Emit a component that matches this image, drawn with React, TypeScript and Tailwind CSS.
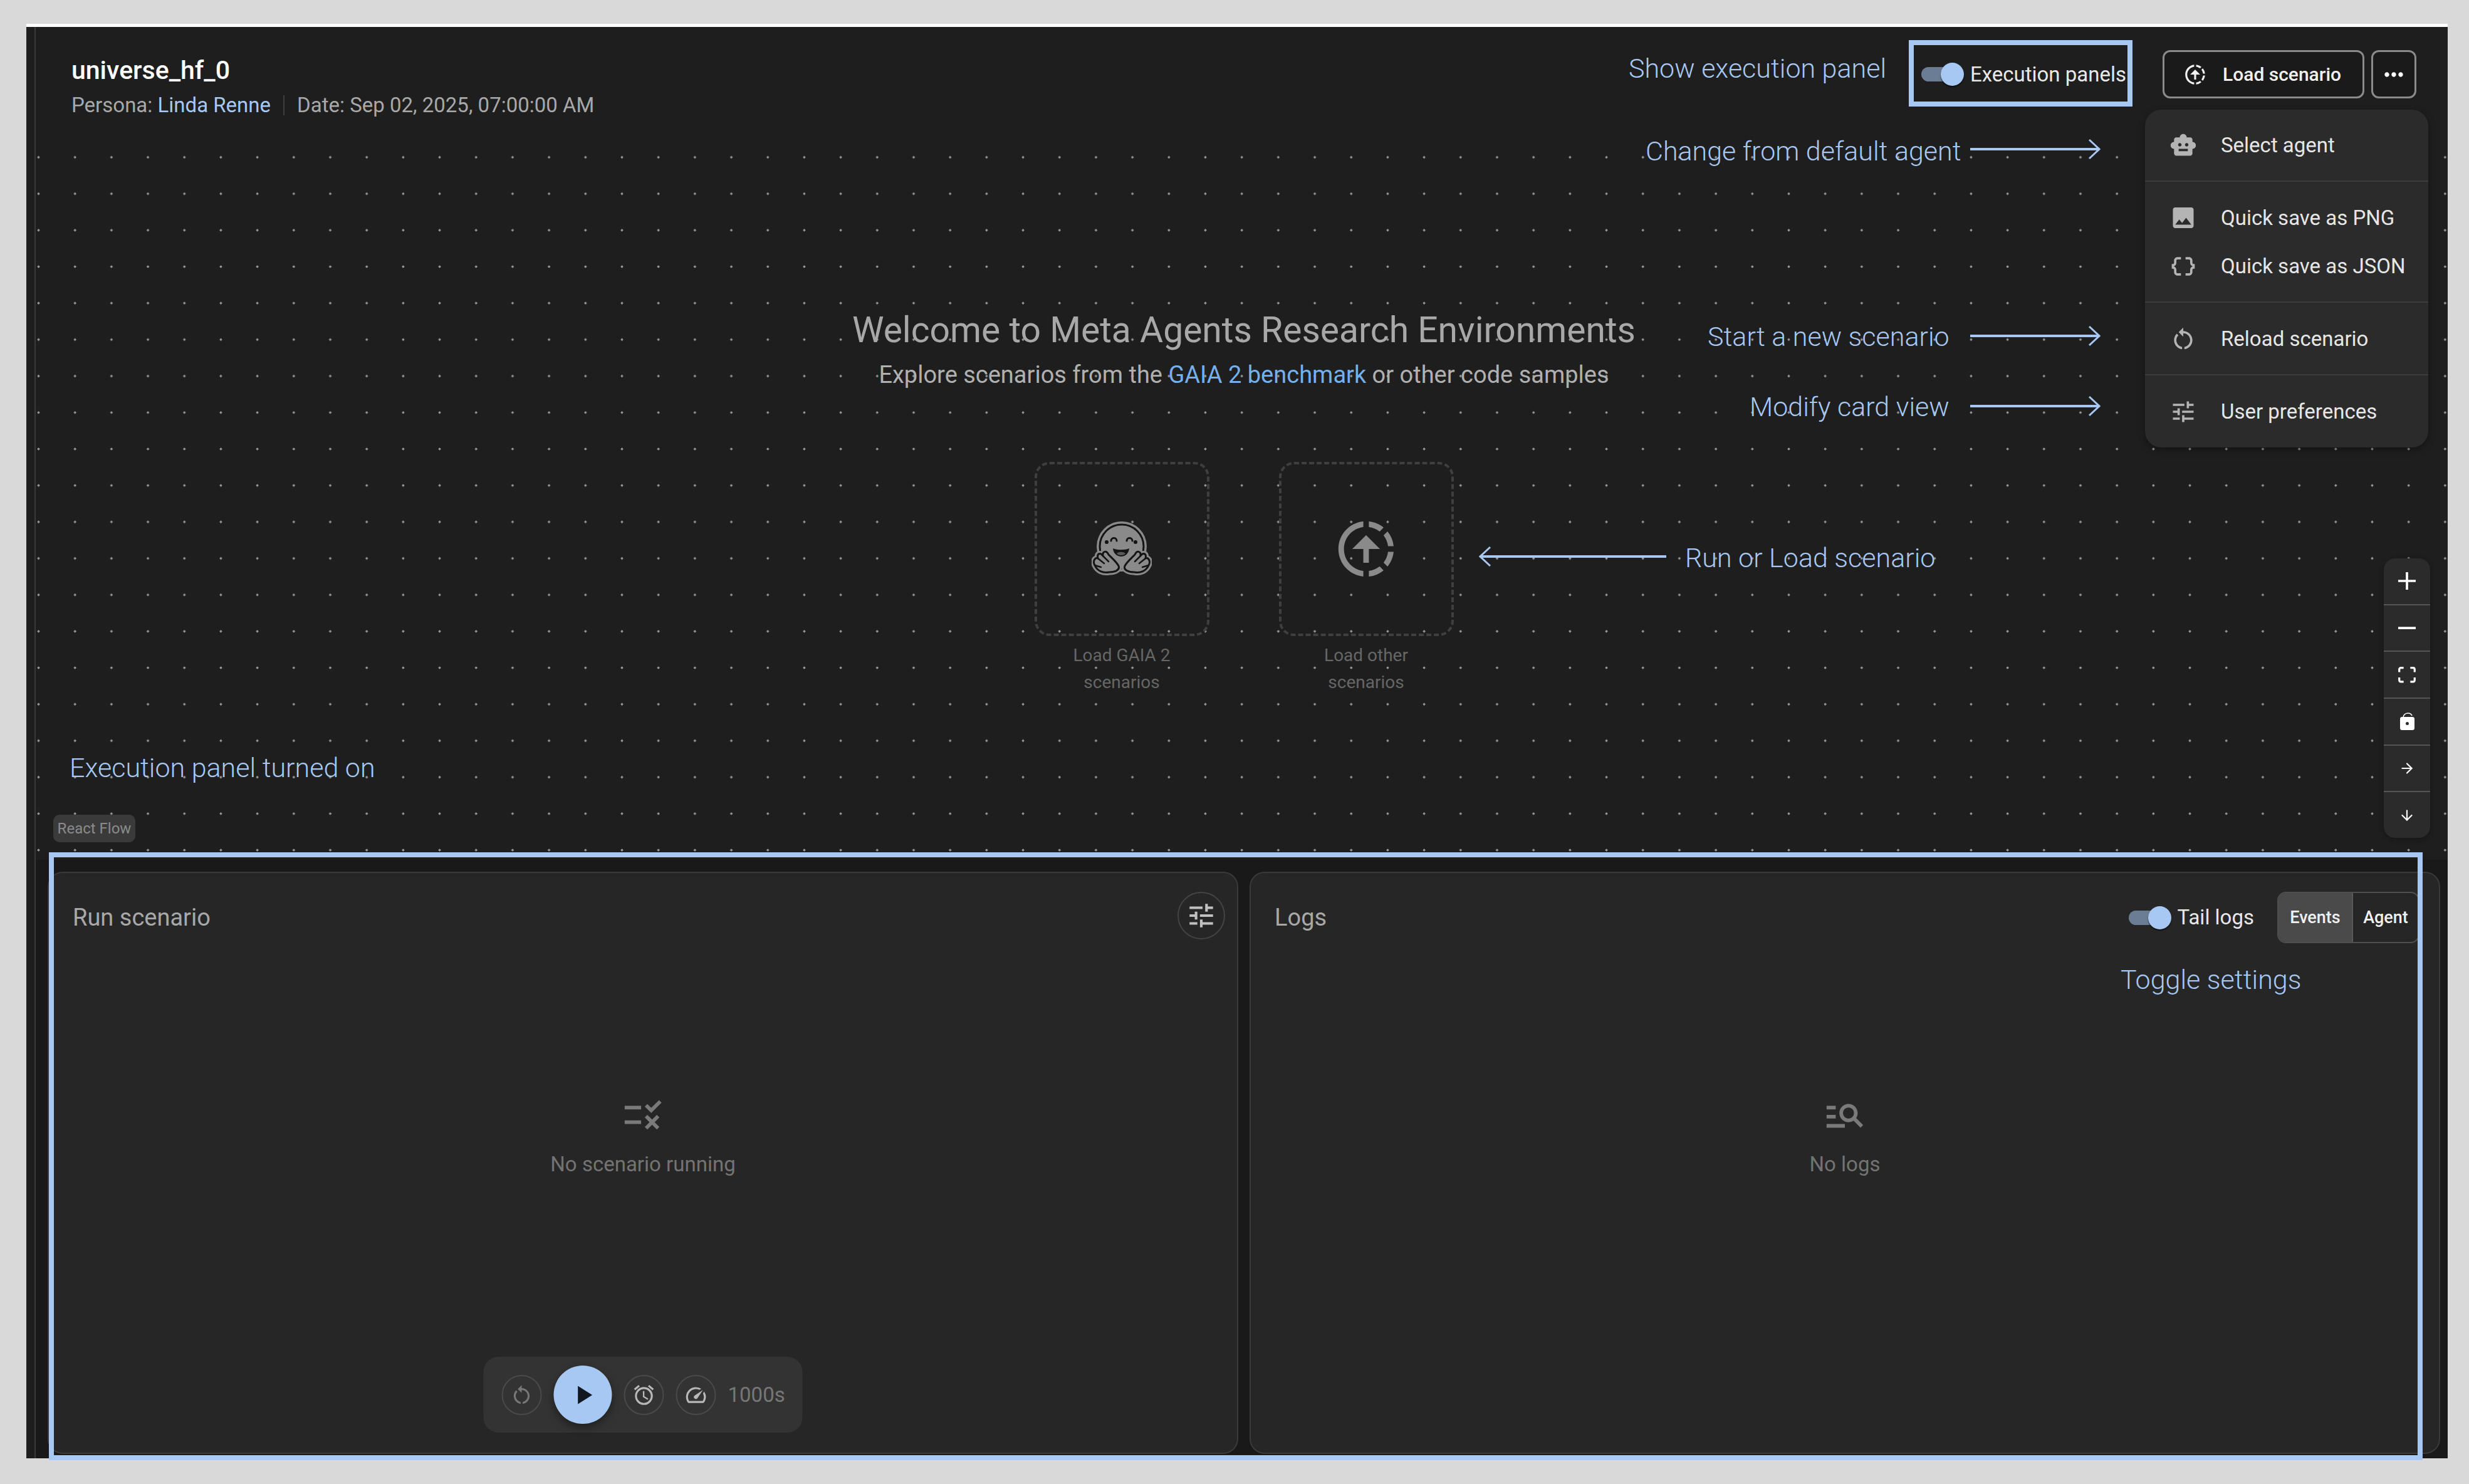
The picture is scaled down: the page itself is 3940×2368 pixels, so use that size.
import { ArrowDown, ArrowRight } from 'lucide-react';
import {
  MdAlarm,
  MdDataObject,
  MdDownloading,
  MdImage,
  MdManageSearch,
  MdMoreHoriz,
  MdPlayArrow,
  MdRestartAlt,
  MdRule,
  MdSmartToy,
  MdSpeed,
  MdTune,
} from 'react-icons/md';

// annotation arrow drawn over the screenshot
function NoteArrow({ className, width, flip }: { className: string; width: number; flip?: boolean }) {
  return (
    <svg
      className={`absolute text-[#a6c8f2] ${flip ? '-scale-x-100' : ''} ${className}`}
      width={width}
      height={36}
      viewBox={`0 0 ${width} 36`}
      fill="none"
      stroke="currentColor"
    >
      <path d={`M0 18H${width - 2}`} strokeWidth={4} />
      <path d={`M${width - 18} 3L${width - 2} 18L${width - 18} 33`} strokeWidth={3} />
    </svg>
  );
}

function Toggle({ label }: { label: string }) {
  return (
    <div className="flex items-center">
      <div className="relative h-[23px] w-[64px] rounded-full bg-[#6b7d94] mr-[14px]">
        <div className="absolute left-[31px] top-[-7px] h-[37px] w-[37px] rounded-full bg-[#a6c8f2] shadow-[0_2px_2px_rgba(0,0,0,0.6)]" />
      </div>
      <span className="text-[33px] leading-[44px] text-[#e8e8e8]">{label}</span>
    </div>
  );
}

function MenuItem({ icon, label }: { icon: React.ReactNode; label: string }) {
  return (
    <div className="flex h-[77px] items-center gap-[38px] pl-[39px] text-[33px] text-[#e6e6e6]">
      <span className="flex w-[44px] justify-center text-[#b4b4b4]">{icon}</span>
      {label}
    </div>
  );
}

function HuggingFace() {
  const hand = 'M5 71C1 64 6 58 10 60C8 52 14 50 18 56C17 48 24 47 27 54C33 60 40 66 43 72C46 79 36 82 28 82C18 84 9 80 5 71Z';
  return (
    <svg width="96" height="90" viewBox="0 0 96 90" strokeLinejoin="round" strokeLinecap="round">
      <circle cx="48" cy="41" r="40" fill="#8a8a8a" />
      <circle cx="48" cy="41" r="35" fill="#8a8a8a" stroke="#141414" strokeWidth="3" />
      <path d="M31 32a4.500 4.500 0 0 1 9 0" fill="none" stroke="#141414" strokeWidth="3" />
      <path d="M56 32a4.500 4.500 0 0 1 9 0" fill="none" stroke="#141414" strokeWidth="3" />
      <circle cx="24" cy="34" r="3" fill="#141414" />
      <circle cx="70" cy="34" r="3" fill="#141414" />
      <path d="M34 44C42 47 54 47 60 44C59 53 53 57 47 57C41 57 35 53 34 44Z" fill="#141414" />
      <path d="M40 52C44 49 50 49 54 52C52 56 42 56 40 52Z" fill="#5a5a5a" />
      <g>
        <path d={hand} fill="#8a8a8a" stroke="#8a8a8a" strokeWidth="9" />
        <path d={hand} fill="#8a8a8a" stroke="#141414" strokeWidth="3" />
        <path d="M10 60L20 68M18 56L27 65M5 71L15 74" stroke="#141414" strokeWidth="2.500" fill="none" />
      </g>
      <g transform="matrix(-1 0 0 1 96 0)">
        <path d={hand} fill="#8a8a8a" stroke="#8a8a8a" strokeWidth="9" />
        <path d={hand} fill="#8a8a8a" stroke="#141414" strokeWidth="3" />
        <path d="M10 60L20 68M18 56L27 65M5 71L15 74" stroke="#141414" strokeWidth="2.500" fill="none" />
      </g>
    </svg>
  );
}

function ControlButton({ children, last }: { children: React.ReactNode; last?: boolean }) {
  return (
    <div className={`flex flex-1 items-center justify-center text-white ${last ? '' : 'border-b-2 border-[#555555]'}`}>
      {children}
    </div>
  );
}

function RoundButton({ children }: { children: React.ReactNode }) {
  return (
    <div className="flex h-[64px] w-[64px] items-center justify-center rounded-full border-2 border-[#4a4a4a]">
      {children}
    </div>
  );
}

export default function App() {
  return (
    <div className="relative h-[2368px] w-[3940px] overflow-hidden bg-[#d9d9d9] pl-[42px] pt-[38px] font-['Roboto',sans-serif]">
      <div className="flex h-[2289px] w-[3864px] border-t-[5px] border-white bg-[#1e1e1e]">
        <div className="w-[15px] shrink-0 border-r-2 border-[#3a3a3a]" />

        <div className="flex min-w-0 flex-1 flex-col">
          {/* canvas */}
          <div className="relative h-[1329px] bg-[#1e1e1e] bg-[radial-gradient(circle,#959595_1.8px,transparent_2.2px)] bg-[length:58.2px_58.2px] bg-[position:-24.6px_4.3px]">
            <header className="flex h-[157px] items-start justify-between bg-[#1e1e1e] pl-[57px] pr-[50px]">
              <div className="pt-[47px]">
                <div className="text-[41px] font-medium leading-[44px] text-white">universe_hf_0</div>
                <div className="mt-[14px] flex items-center text-[33px] leading-[40px] text-[#a8a8a8]">
                  <span>Persona:&nbsp;</span>
                  <span className="text-[#a6c8f2]">Linda Renne</span>
                  <span className="mx-[20px] h-[32px] w-[2px] bg-[#3f3f3f]" />
                  <span>Date: Sep 02, 2025, 07:00:00 AM</span>
                </div>
              </div>
              <div className="flex items-center pt-[37px]">
                <Toggle label="Execution panels" />
                <button className="ml-[58px] flex h-[77px] w-[322px] items-center rounded-[12px] border-[3px] border-[#8a8a8a] bg-[#1a1a1a] pl-[30px] text-[30px] font-medium text-[#f0f0f0]">
                  <MdDownloading size={38} className="-scale-y-100" />
                  <span className="ml-[25px]">Load scenario</span>
                </button>
                <button className="ml-[11px] flex h-[77px] w-[72px] items-center justify-center rounded-[12px] border-[3px] border-[#8a8a8a] bg-[#1a1a1a] text-white">
                  <MdMoreHoriz size={44} />
                </button>
              </div>
            </header>

            {/* welcome node */}
            <div className="absolute left-[1071px] top-[454px] w-[1714px] text-center">
              <div className="text-[57px] leading-[60px] text-[#a8a8a8]">Welcome to Meta Agents Research Environments</div>
              <div className="mt-[21px] text-[38px] leading-[40px] text-[#b0b0b0]">
                Explore scenarios from the <span className="text-[#74b0ee]">GAIA 2 benchmark</span> or other code samples
              </div>
              <div className="mt-[119px] flex justify-center gap-[111px]">
                <div className="w-[279px]">
                  <div className="flex h-[278px] items-center justify-center rounded-[24px] border-4 border-dashed border-[#3f3f3f]">
                    <HuggingFace />
                  </div>
                  <div className="mt-[9px] text-[28px] leading-[43px] text-[#666666]">
                    Load GAIA 2<br />scenarios
                  </div>
                </div>
                <div className="w-[279px]">
                  <div className="flex h-[278px] items-center justify-center rounded-[24px] border-4 border-dashed border-[#3f3f3f]">
                    <MdDownloading size={106} className="-scale-y-100 text-[#8a8a8a]" />
                  </div>
                  <div className="mt-[9px] text-[28px] leading-[43px] text-[#666666]">
                    Load other<br />scenarios
                  </div>
                </div>
              </div>
            </div>

            {/* zoom controls */}
            <div className="absolute right-[28px] top-[848px] flex h-[446px] w-[74px] flex-col overflow-hidden rounded-[18px] bg-[#2b2b2b] shadow-[0_2px_8px_rgba(0,0,0,0.3)]">
              <ControlButton>
                <svg width="28" height="28" viewBox="0 0 32 32" fill="currentColor">
                  <path d="M32 18.133H18.133V32h-4.266V18.133H0v-4.266h13.867V0h4.266v13.867H32z" />
                </svg>
              </ControlButton>
              <ControlButton>
                <svg width="28" height="5" viewBox="0 0 32 5" fill="currentColor">
                  <path d="M0 0h32v4.200H0z" />
                </svg>
              </ControlButton>
              <ControlButton>
                <svg width="28" height="26" viewBox="0 0 32 30" fill="currentColor">
                  <path d="M3.692 4.630c0-.53.4-.938.939-.938h5.215V0H4.708C2.130 0 0 2.054 0 4.630v5.216h3.692V4.631zM27.354 0h-5.200v3.692h5.170c.53 0 .984.4.984.939v5.215H32V4.631A4.624 4.624 0 0027.354 0zm.954 24.830c0 .532-.4.940-.939.940h-5.215v3.768h5.215c2.577 0 4.631-2.130 4.631-4.707v-5.139h-3.692v5.139zm-23.677.940c-.531 0-.939-.4-.939-.940v-5.138H0v5.139c0 2.577 2.130 4.707 4.708 4.707h5.138V25.770H4.631z" />
                </svg>
              </ControlButton>
              <ControlButton>
                <svg width="23" height="28" viewBox="0 0 23 28">
                  <path d="M5 7C6 3 9 1 13 1C16 1 18 2.500 19 5" fill="none" stroke="currentColor" strokeWidth="1.600" />
                  <path
                    d="M3 7H20C21.700 7 23 8.300 23 10V25C23 26.700 21.700 28 20 28H3C1.300 28 0 26.700 0 25V10C0 8.300 1.300 7 3 7ZM11.500 15A2.500 2.500 0 1 0 11.500 20A2.500 2.500 0 1 0 11.500 15Z"
                    fill="currentColor"
                    fillRule="evenodd"
                  />
                </svg>
              </ControlButton>
              <ControlButton>
                <ArrowRight size={26} strokeWidth={2} />
              </ControlButton>
              <ControlButton last>
                <ArrowDown size={26} strokeWidth={2} />
              </ControlButton>
            </div>

            <div className="absolute left-[28px] top-[1257px] flex h-[44px] w-[131px] items-center justify-center rounded-[10px] bg-[#3a3a3a] text-[24px] text-[#8a8a8a]">
              React Flow
            </div>
          </div>

          {/* execution panels */}
          <div className="flex flex-1 gap-[18px] bg-[#191919] pb-[7px] pl-[19px] pr-[12px] pt-[19px]">
            <section className="relative flex flex-1 flex-col rounded-[24px] border-2 border-[#3a3a3a] bg-[#262626]">
              <div className="flex h-[142px] items-center justify-between pl-[38px] pr-[19px]">
                <span className="text-[38px] text-[#a8a8a8]">Run scenario</span>
                <div className="mb-[6px] flex h-[76px] w-[76px] items-center justify-center rounded-full border-2 border-[#444444] text-[#c0c0c0]">
                  <MdTune size={50} />
                </div>
              </div>
              <div className="flex flex-1 flex-col items-center pt-[209px]">
                <MdRule size={70} className="text-[#7a7a7a]" />
                <span className="mt-[21px] text-[33px] leading-[45px] text-[#737373]">No scenario running</span>
              </div>
              <div className="absolute bottom-[32px] left-1/2 flex h-[121px] w-[509px] -translate-x-1/2 items-center gap-[19px] rounded-[24px] bg-[#333333] pl-[29px]">
                <RoundButton>
                  <MdRestartAlt size={38} className="text-[#777777]" />
                </RoundButton>
                <div className="flex h-[93px] w-[93px] items-center justify-center rounded-full bg-[#a6c8f2] shadow-[0_6px_14px_rgba(0,0,0,0.4)]">
                  <MdPlayArrow size={50} className="text-[#12181f]" />
                </div>
                <RoundButton>
                  <MdAlarm size={38} className="text-[#b8b8b8]" />
                </RoundButton>
                <RoundButton>
                  <MdSpeed size={38} className="text-[#b8b8b8]" />
                </RoundButton>
                <span className="text-[33px] text-[#777777]">1000s</span>
              </div>
            </section>

            <section className="relative flex flex-1 flex-col rounded-[24px] border-2 border-[#3a3a3a] bg-[#262626]">
              <div className="flex h-[142px] items-center justify-between pl-[38px] pr-[31px]">
                <span className="text-[38px] text-[#a8a8a8]">Logs</span>
                <div className="flex items-center">
                  <Toggle label="Tail logs" />
                  <div className="ml-[37px] flex h-[82px] rounded-[14px] border-2 border-[#4f4f4f] text-[27px] font-medium text-[#f0f0f0]">
                    <div className="flex w-[119px] items-center justify-center rounded-l-[12px] border-r-2 border-[#5a5a5a] bg-[#4a4a4a]">Events</div>
                    <div className="flex w-[104px] items-center justify-center">Agent</div>
                  </div>
                </div>
              </div>
              <div className="flex flex-1 flex-col items-center pt-[209px]">
                <MdManageSearch size={70} className="text-[#7a7a7a]" />
                <span className="mt-[21px] text-[33px] leading-[45px] text-[#737373]">No logs</span>
              </div>
            </section>
          </div>
        </div>
      </div>

      {/* dropdown menu */}
      <div className="absolute left-[3423px] top-[175px] w-[452px] rounded-[26px] bg-[#2b2b2b] shadow-[0_4px_12px_rgba(0,0,0,0.35)]">
        <div className="border-b-2 border-[#3d3d3d] py-[18px]">
          <MenuItem icon={<MdSmartToy size={52} />} label="Select agent" />
        </div>
        <div className="border-b-2 border-[#3d3d3d] pb-[18px] pt-[19px]">
          <MenuItem icon={<MdImage size={49} />} label="Quick save as PNG" />
          <MenuItem icon={<MdDataObject size={46} />} label="Quick save as JSON" />
        </div>
        <div className="border-b-2 border-[#3d3d3d] pb-[18px] pt-[19px]">
          <MenuItem icon={<MdRestartAlt size={48} />} label="Reload scenario" />
        </div>
        <div className="py-[19px]">
          <MenuItem icon={<MdTune size={48} />} label="User preferences" />
        </div>
      </div>

      {/* annotations */}
      <div className="absolute left-[3046px] top-[64px] h-[106px] w-[357px] border-8 border-[#a6c8f2]" />
      <div className="absolute left-[78px] top-[1360px] h-[970px] w-[3788px] border-8 border-[#a6c8f2]" />

      <span className="absolute left-[2599px] top-[84px] text-[43px] font-light leading-[50px] text-[#a6c8f2]">Show execution panel</span>
      <span className="absolute left-[2626px] top-[216px] text-[43px] font-light leading-[50px] text-[#a6c8f2]">Change from default agent</span>
      <span className="absolute left-[2725px] top-[512px] text-[43px] font-light leading-[50px] text-[#a6c8f2]">Start a new scenario</span>
      <span className="absolute left-[2792px] top-[624px] text-[43px] font-light leading-[50px] text-[#a6c8f2]">Modify card view</span>
      <span className="absolute left-[2689px] top-[865px] text-[43px] font-light leading-[50px] text-[#a6c8f2]">Run or Load scenario</span>
      <span className="absolute left-[111px] top-[1200px] text-[43px] font-light leading-[50px] text-[#a6c8f2]">Execution panel turned on</span>
      <span className="absolute left-[3384px] top-[1538px] text-[43px] font-light leading-[50px] text-[#a6c8f2]">Toggle settings</span>

      <NoteArrow className="left-[3144px] top-[220px]" width={208} />
      <NoteArrow className="left-[3144px] top-[518px]" width={208} />
      <NoteArrow className="left-[3144px] top-[630px]" width={208} />
      <NoteArrow className="left-[2360px] top-[870px]" width={299} flip />
    </div>
  );
}
